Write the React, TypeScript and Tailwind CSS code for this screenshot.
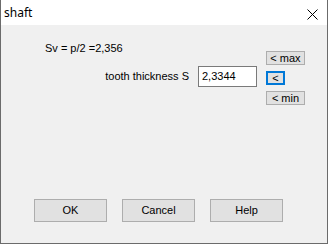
import React from "react";

const F = { fontFamily: '"Liberation Sans", Arial, sans-serif' };

function SmallBtn({ children, w }: { children: React.ReactNode; w: string }) {
  return (
    <div
      className={`${w} h-[14px] border border-[#adadad] bg-[#e1e1e1] flex items-center justify-center text-[11px] leading-none text-black`}
    >
      {children}
    </div>
  );
}

function BigBtn({ children }: { children: React.ReactNode }) {
  return (
    <div className="w-[73px] h-[23px] border border-[#adadad] bg-[#e1e1e1] flex items-center justify-center text-[11px] text-black">
      {children}
    </div>
  );
}

export default function App() {
  return (
    <div
      className="w-[328px] h-[244px] flex flex-col border-x border-b border-[#6b6b6b] bg-[#f0f0f0] overflow-hidden"
      style={F}
    >
      <div className="h-[25px] bg-white flex items-center justify-between pl-[3px] pr-[9px] shrink-0">
        <span
          className="text-[12px] text-black"
          style={{ fontFamily: '"Noto Sans", "Open Sans", sans-serif' }}
        >
          shaft
        </span>
        <svg width="11" height="11" viewBox="0 0 11 11" className="mt-[3px]">
          <path d="M0.5 0.5 L10.5 10.5 M10.5 0.5 L0.5 10.5" stroke="#000" strokeWidth="1" />
        </svg>
      </div>
      <div className="flex-1 flex flex-col">
        <div className="flex">
          <div className="w-[265px] pl-[44px] pr-[9px] pt-[17px]">
            <div className="text-[11px] leading-[13px] text-black">Sv = p/2 =2,356</div>
            <div className="flex items-center justify-end gap-[9px] mt-[11px]">
              <span className="text-[11px] leading-[13px] text-black">tooth thickness S</span>
              <div className="w-[59px] h-[21px] border border-[#7a7a7a] bg-white flex items-center pl-[3px] text-[11px] text-black">
                2,3344
              </div>
            </div>
          </div>
          <div className="flex flex-col gap-[6px] pt-[26px]">
            <SmallBtn w="w-[39px]">&lt; max</SmallBtn>
            <div className="w-[19px] h-[14px] border-2 border-[#0078d7] bg-[#e1e1e1] flex items-center justify-center text-[11px] leading-none text-black">
              &lt;
            </div>
            <SmallBtn w="w-[39px]">&lt; min</SmallBtn>
          </div>
        </div>
        <div className="mt-auto mb-[21px] pl-[33px] flex gap-[15px]">
          <BigBtn>OK</BigBtn>
          <BigBtn>Cancel</BigBtn>
          <BigBtn>Help</BigBtn>
        </div>
      </div>
    </div>
  );
}
